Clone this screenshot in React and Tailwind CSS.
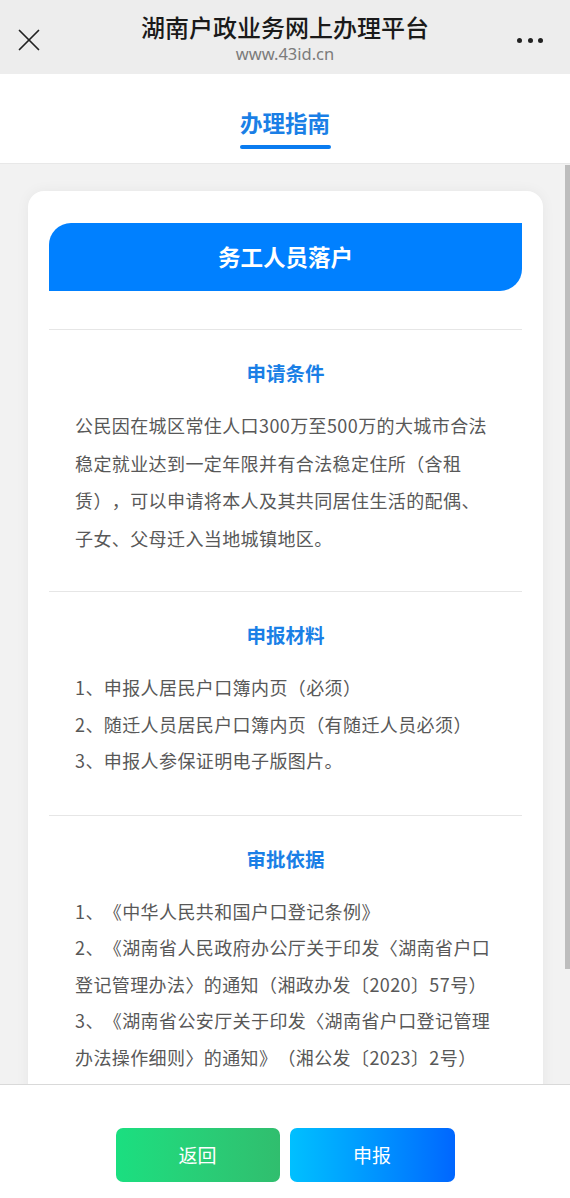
import { X } from 'lucide-react'

const font = { fontFamily: '"Noto Sans CJK SC", "Noto Sans", sans-serif' }

const sections = [
  {
    title: '申请条件',
    type: 'text',
    body: '公民因在城区常住人口300万至500万的大城市合法稳定就业达到一定年限并有合法稳定住所（含租赁），可以申请将本人及其共同居住生活的配偶、子女、父母迁入当地城镇地区。',
  },
  {
    title: '申报材料',
    type: 'list',
    items: [
      '1、申报人居民户口簿内页（必须）',
      '2、随迁人员居民户口簿内页（有随迁人员必须）',
      '3、申报人参保证明电子版图片。',
    ],
  },
  {
    title: '审批依据',
    type: 'list',
    items: [
      '1、《中华人民共和国户口登记条例》',
      '2、《湖南省人民政府办公厅关于印发〈湖南省户口登记管理办法〉的通知（湘政办发〔2020〕57号）',
      '3、《湖南省公安厅关于印发〈湖南省户口登记管理办法操作细则〉的通知》（湘公发〔2023〕2号）',
    ],
  },
]

function Section({ s }) {
  return (
    <div className={`border-t border-[#e6e6e6] px-[26px] pt-[29px] ${s.type === 'text' ? 'pb-[34px]' : 'pb-[36px]'}`}>
      <h3 className="text-center text-[19.5px] font-bold leading-[28px] text-[#1a7fe6]">{s.title}</h3>
      <div className="mt-[20px] text-[18px] tracking-[0.4px] text-[#585858] [text-spacing-trim:space-all]">
        {s.type === 'text' ? (
          <p className="leading-[37.5px]">{s.body}</p>
        ) : (
          s.items.map((it, i) => (
            <p key={i} className="leading-[36.5px]">{it}</p>
          ))
        )}
      </div>
    </div>
  )
}

export default function App() {
  return (
    <div style={font} className="flex h-[1198px] w-[570px] flex-col overflow-hidden bg-white">
      {/* top bar */}
      <div className="flex h-[74px] shrink-0 items-start bg-[#ededed]">
        <div className="flex w-[57px] justify-center pt-[21px]">
          <X size={38} strokeWidth={1.1} className="text-[#222]" />
        </div>
        <div className="flex flex-1 flex-col items-center pt-[11px]">
          <h1 className="text-[24px] font-medium leading-[32px] text-[#1a1a1a]">湖南户政业务网上办理平台</h1>
          <p className="text-[16.5px] leading-[22px] text-[#7b7b7b]" style={{ fontFamily: '"Noto Sans", sans-serif' }}>www.43id.cn</p>
        </div>
        <div className="flex w-[57px] items-center justify-start gap-[5.5px] pl-[4px] pt-[38px]">
          <span className="h-[5px] w-[5px] rounded-full bg-[#222]" />
          <span className="h-[5px] w-[5px] rounded-full bg-[#222]" />
          <span className="h-[5px] w-[5px] rounded-full bg-[#222]" />
        </div>
      </div>

      {/* tab */}
      <div className="flex h-[90px] shrink-0 flex-col items-center border-b border-[#e8e8e8] pt-[33px]">
        <span className="text-[22.5px] font-bold leading-[30px] text-[#1a7fe6]">办理指南</span>
        <span className="mt-[8px] h-[4px] w-[91px] rounded-full bg-[#0a7cf0]" />
      </div>

      {/* scroll area */}
      <div className="relative flex-1 overflow-hidden bg-[#f2f2f2] px-[28px] pt-[27px]">
        <div className="w-[515px] rounded-[16px] bg-white px-[21px] pt-[32px] shadow-[0_0_14px_rgba(0,0,0,0.05)]">
          <div className="flex h-[68px] items-center justify-center rounded-tl-[22px] rounded-br-[22px] bg-[#0080ff]">
            <span className="text-[22.5px] font-bold text-white">务工人员落户</span>
          </div>
          <div className="mt-[38px]">
            {sections.map((s, i) => (
              <Section key={i} s={s} />
            ))}
          </div>
        </div>
        <div className="absolute right-0 top-[1px] h-[804px] w-[5px] bg-[#bdbdbd]" />
      </div>

      {/* bottom buttons */}
      <div className="flex h-[114px] shrink-0 justify-center gap-[10px] border-t border-[#d9d9d9] bg-white pt-[43px]">
        <button className="h-[54px] w-[164px] rounded-[7px] bg-gradient-to-r from-[#1adf80] to-[#30be6e] text-[19px] text-white">返回</button>
        <button className="h-[54px] w-[165px] rounded-[7px] bg-gradient-to-r from-[#00c0ff] to-[#0066ff] text-[19px] text-white">申报</button>
      </div>
    </div>
  )
}
